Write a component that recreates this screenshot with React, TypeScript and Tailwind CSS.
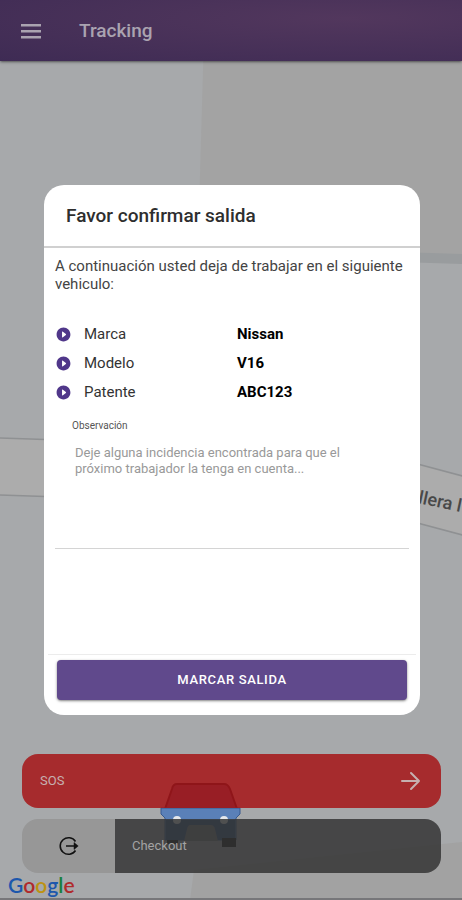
import { IoCaretForwardCircle } from 'react-icons/io5';

const VEHICLE = [
  { label: 'Marca', value: 'Nissan' },
  { label: 'Modelo', value: 'V16' },
  { label: 'Patente', value: 'ABC123' },
];

const GOOGLE = [
  { char: 'G', color: 'text-[#1d57ac]' },
  { char: 'o', color: 'text-[#b02a2c]' },
  { char: 'o', color: 'text-[#bd9212]' },
  { char: 'g', color: 'text-[#1d57ac]' },
  { char: 'l', color: 'text-[#17803c]' },
  { char: 'e', color: 'text-[#b02a2c]' },
];

function MapCanvas() {
  return (
    <svg
      className="absolute inset-0 h-full w-full"
      viewBox="0 0 462 900"
      preserveAspectRatio="xMidYMid slice"
      aria-hidden="true"
    >
      <rect width="462" height="900" fill="#a7a9ab" />
      {/* Blocks */}
      <path d="M205 0 H462 V256 L198 246 Z" fill="#a3a3a3" />
      <path d="M400 252 L462 254 V264 L400 262 Z" fill="#999c9e" />
      <path d="M190 900 L194 870 L462 842 V900 Z" fill="#a2a2a2" />
      {/* Streets */}
      <path d="M0 438 L60 440 V497 L0 495 Z" fill="#acacac" />
      <path d="M0 438 L60 440 M0 495 L60 497" stroke="#8f9193" strokeWidth="1.5" />
      <path d="M410 462 L470 478 V537 L410 521 Z" fill="#acacac" />
      <path d="M410 462 L470 478 M410 521 L470 537" stroke="#8f9193" strokeWidth="1.5" />
      <text
        x="413"
        y="502"
        transform="rotate(12 413 502)"
        fontFamily="Roboto, sans-serif"
        fontSize="18"
        fontWeight="500"
        fill="#484848"
      >
        illera l
      </text>
      {/* Car */}
      <path d="M177 784 H224 Q228 784 230 789 L237 809 H165 L172 789 Q173 784 177 784 Z" fill="#4a4f78" stroke="#12142c" strokeWidth="2" />
      <path d="M161 808 H240 V814 L236 818 V840 H165 V818 L161 814 Z" fill="#5a80b8" stroke="#36598f" strokeWidth="1" />
      <path d="M166 820 H235 V840 H166 Z" fill="#2a4f80" />
      <path d="M190 825 H211 Q214 825 215 829 L218 841 H184 L187 829 Q188 825 190 825 Z" fill="#75777c" />
      <path d="M167 840 H178 V844 H167 Z M222 838 H236 V847 H222 Z" fill="#0b0b0b" />
      <circle cx="177" cy="820" r="4" fill="#e4e7ec" />
      <circle cx="224" cy="820" r="4" fill="#e4e7ec" />
      <rect y="898" width="462" height="2" fill="#77777a" />
    </svg>
  );
}

function Header() {
  return (
    <header className="relative flex h-[61px] items-center gap-[38px] bg-[#3e2b54] bg-radial-[at_75%_30%] from-[#52375d] to-[#3e2b54] px-[21px] shadow-sm shadow-black/40">
      <button type="button" aria-label="Menú" className="text-[#aaa3b0]">
        <svg width="20" height="16" viewBox="0 0 20 16" fill="currentColor">
          <path d="M0 1h20v2.500H0zM0 7h20v2.500H0zM0 13h20v2.500H0z" />
        </svg>
      </button>
      <h1 className="text-[19px] leading-6 font-medium text-[#aaa3b0]">Tracking</h1>
    </header>
  );
}

function Actions() {
  return (
    <div className="relative mt-auto pr-[21px] pl-[22px]">
      <button
        type="button"
        className="flex h-[54px] w-full items-center justify-between rounded-2xl bg-[#a61516]/85 pr-5 pl-[18px] text-[#c6b0b0]"
      >
        <span className="text-[13px] leading-4">SOS</span>
        <svg width="20" height="20" viewBox="0 0 20 20" fill="none" stroke="currentColor" strokeWidth="2" strokeLinecap="round" strokeLinejoin="round">
          <path d="M1 10h17M10 2l8 8-8 8" />
        </svg>
      </button>
      <button
        type="button"
        className="mt-[11px] flex h-[54px] w-full overflow-hidden rounded-2xl text-[#a3a3a3]"
      >
        <span className="flex h-full w-[93px] items-center justify-center bg-[#979797]">
          <svg width="20" height="20" viewBox="0 0 20 20" fill="none" stroke="#111" strokeWidth="1.6">
            <path d="M16.500 5.500A8.300 8.300 0 1 0 16.500 14.500" />
            <path d="M7 10h9" />
            <path d="M15 6.500L19.200 10L15 13.500z" fill="#111" strokeWidth="0.5" />
          </svg>
        </span>
        <span className="flex h-full flex-1 items-center bg-[#353535]/85 pl-[17px] text-[13px] leading-4">Checkout</span>
      </button>
      <div className="-ml-[14px] flex h-[27px] items-start font-[Lato,sans-serif] text-[21px] leading-[24px] font-semibold">
        {GOOGLE.map((g, i) => (
          <span key={i} className={g.color}>{g.char}</span>
        ))}
      </div>
    </div>
  );
}

function ConfirmDialog() {
  return (
    <div className="absolute inset-0 flex items-center justify-center pr-[42px] pl-11">
      <div
        role="dialog"
        aria-labelledby="dialog-title"
        className="flex min-h-[530px] w-full flex-col rounded-[20px] bg-white text-[#2e2e2e]"
      >
        <div className="border-b-2 border-[#d0d0d0] px-[22px] py-[18px]">
          <h2 id="dialog-title" className="text-[19px] leading-[25px] font-medium">Favor confirmar salida</h2>
        </div>

        <div className="flex flex-1 flex-col px-[11px] pt-[9px]">
          <p className="text-[15px] leading-[18px] text-[#444]">
            A continuación usted deja de trabajar en el siguiente vehiculo:
          </p>

          <dl className="mt-[27px]">
            {VEHICLE.map((v) => (
              <div key={v.label} className="flex h-[29px] items-center text-[15px]">
                <IoCaretForwardCircle size={17} className="text-[#50378a]" />
                <dt className="ml-3 w-[153px] text-[#333]">{v.label}</dt>
                <dd className="font-bold text-black">{v.value}</dd>
              </div>
            ))}
          </dl>

          <label htmlFor="observacion" className="mt-[13px] pl-[17px] text-[10px] leading-3 text-[#555]">
            Observación
          </label>
          <textarea
            id="observacion"
            placeholder="Deje alguna incidencia encontrada para que el próximo trabajador la tenga en cuenta..."
            className="mt-[5px] h-[112px] w-full resize-none border-b border-[#d4d4d4] py-2 pr-10 pl-5 text-[13px] leading-4 outline-none placeholder:text-[#999]"
          />
        </div>

        <div className="mx-1 border-t border-[#ececec] px-[9px] pt-[5px] pb-[15px]">
          <button
            type="button"
            className="h-10 w-full rounded bg-[#60498c] text-[13px] font-medium tracking-wider text-white uppercase shadow shadow-black/40"
          >
            Marcar salida
          </button>
        </div>
      </div>
    </div>
  );
}

export default function App() {
  return (
    <div className="relative flex min-h-screen flex-col overflow-hidden font-[Roboto,sans-serif]">
      <MapCanvas />
      <Header />
      <Actions />
      <ConfirmDialog />
    </div>
  );
}
